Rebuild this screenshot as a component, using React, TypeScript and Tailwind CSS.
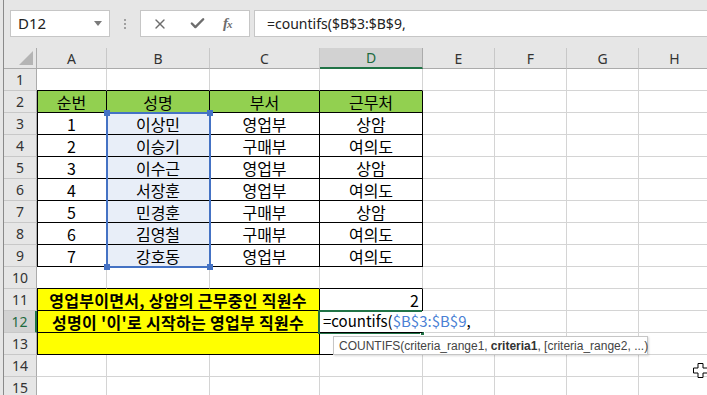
import { X, Check } from 'lucide-react';

const COLS = ['A', 'B', 'C', 'D', 'E', 'F', 'G', 'H'];
const ROWS = Array.from({ length: 15 }, (_, i) => i + 1);

const body: Record<number, string[]> = {
    2: ['순번', '성명', '부서', '근무처'],
    3: ['1', '이상민', '영업부', '상암'],
    4: ['2', '이승기', '구매부', '여의도'],
    5: ['3', '이수근', '영업부', '상암'],
    6: ['4', '서장훈', '영업부', '여의도'],
    7: ['5', '민경훈', '구매부', '상암'],
    8: ['6', '김영철', '구매부', '여의도'],
    9: ['7', '강호동', '영업부', '여의도'],
};

const inTable = (r: number, c: number) => c < 4 && ((r >= 2 && r <= 9) || (r >= 11 && r <= 13));

const cellFont = "font-['Noto_Sans_CJK_KR',sans-serif] text-[16px] text-black";

function Cell({ r, c }: { r: number; c: number }) {
    const right = inTable(r, c) || inTable(r, c + 1) ? 'border-r-black' : 'border-r-[#d4d4d4]';
    const bottom = inTable(r, c) || inTable(r + 1, c) ? 'border-b-black' : 'border-b-[#d4d4d4]';
    const leftEdge = c === 0 && inTable(r, c) ? 'shadow-[inset_1px_0_0_#000]' : '';
    let bg = '';
    if (r === 2 && c < 4) bg = 'bg-[#92d050]';
    if (r >= 3 && r <= 9 && c === 1) bg = 'bg-[#e8eef8]';
    const text = body[r]?.[c];

    if (r === 12 && c === 3) {
        // cell being edited: text runs over into E12, no right edge drawn
        return (
            <div className={`border-r border-b border-r-transparent ${bottom} flex items-center pl-[3px] whitespace-nowrap overflow-visible relative z-30 font-['Noto_Sans_CJK_KR',sans-serif] text-[15px] text-black`}>
                <span>=countifs(</span>
                <span className="text-[#4a7fd4]">$B$3:$B$9</span>
                <span>,</span>
            </div>
        );
    }

    return (
        <div className={`border-r border-b ${right} ${bottom} ${leftEdge} ${bg} flex items-center justify-center ${cellFont}`}>
            {r === 11 && c === 3 ? <span className="ml-auto pr-[3px]">2</span> : text}
        </div>
    );
}

function YellowMerged({ label }: { label: string }) {
    return (
        <div className={`col-span-3 border-r border-b border-r-black border-b-black shadow-[inset_1px_0_0_#000] bg-[#ffff00] flex items-center justify-center font-bold tracking-[0.3px] ${cellFont}`}>
            {label}
        </div>
    );
}

export default function App() {
    return (
        <div className="relative w-[707px] h-[395px] overflow-hidden bg-[#e6e6e6] font-['Noto_Sans',sans-serif]">
            <div className="ml-[3px] border-l border-l-[#8a8a8a] h-full flex flex-col">
                {/* formula bar */}
                <div className="h-[48px] flex items-start pt-[10px] pl-[6px] shrink-0">
                    <div className="w-[100px] h-[27px] bg-white border border-[#c6c6c6] flex items-center pl-[7px] pr-[7px]">
                        <span className="text-[15px] text-[#222]">D12</span>
                        <span className="ml-auto w-0 h-0 border-l-[4px] border-r-[4px] border-t-[5px] border-l-transparent border-r-transparent border-t-[#7a7a7a]" />
                    </div>
                    <div className="w-[30px] h-[27px] flex flex-col items-center justify-center gap-[2px]">
                        <span className="w-[2px] h-[2px] bg-[#a0a0a0]" />
                        <span className="w-[2px] h-[2px] bg-[#a0a0a0]" />
                        <span className="w-[2px] h-[2px] bg-[#a0a0a0]" />
                    </div>
                    <div className="w-[110px] h-[27px] bg-white border border-[#c6c6c6] flex items-center">
                        <X className="w-[16px] h-[16px] text-[#6d6d6d] ml-[11px]" strokeWidth={2} />
                        <Check className="w-[17px] h-[17px] text-[#6d6d6d] ml-[21px]" strokeWidth={3.4} />
                        <span className="ml-[17px] italic font-['Liberation_Serif',serif] text-[#6d6d6d] text-[15px] font-bold tracking-[-1px]">
                            f<span className="text-[11px]">x</span>
                        </span>
                    </div>
                    <div className="ml-[4px] flex-1 h-[27px] bg-white border border-[#c6c6c6] border-r-0 flex items-center pl-[12px]">
                        <span className="text-[14px] text-[#222]">=countifs($B$3:$B$9,</span>
                    </div>
                </div>

                {/* sheet grid */}
                <div className="grid grid-cols-[33px_70px_103px_110px_103px_72px_72px_72px_72px] grid-rows-[21px_repeat(15,22px)] bg-white">
                    <div className="bg-[#e6e6e6] border-r border-b border-[#ababab] relative">
                        <svg className="absolute right-[3px] bottom-[3px]" width="14" height="14" viewBox="0 0 14 14">
                            <polygon points="14,0 14,14 0,14" fill="#b4b4b4" />
                        </svg>
                    </div>
                    {COLS.map((c) =>
                        c === 'D' ? (
                            <div key={c} className="bg-[#d2d2d2] border-r border-r-[#ababab] border-b-2 border-b-[#217346] flex items-center justify-center text-[14px] text-[#1e6b3f]">
                                {c}
                            </div>
                        ) : (
                            <div key={c} className="bg-[#e6e6e6] border-r border-r-[#c8c8c8] border-b border-b-[#ababab] flex items-center justify-center text-[14px] text-[#333]">
                                {c}
                            </div>
                        )
                    )}
                    {ROWS.map((r) => (
                        <div key={r} className="contents">
                            {r === 12 ? (
                                <div className="bg-[#d2d2d2] border-r-2 border-r-[#217346] border-b border-b-[#c8c8c8] flex items-center justify-center text-[14px] text-[#1e6b3f]">
                                    {r}
                                </div>
                            ) : (
                                <div className="bg-[#e6e6e6] border-r border-r-[#ababab] border-b border-b-[#c8c8c8] flex items-center justify-center text-[14px] text-[#333]">
                                    {r}
                                </div>
                            )}
                            {r === 11 ? (
                                <>
                                    <YellowMerged label="영업부이면서, 상암의 근무중인 직원수" />
                                    {[3, 4, 5, 6, 7].map((c) => <Cell key={c} r={r} c={c} />)}
                                </>
                            ) : r === 12 ? (
                                <>
                                    <YellowMerged label="성명이 '이'로 시작하는 영업부 직원수" />
                                    {[3, 4, 5, 6, 7].map((c) => <Cell key={c} r={r} c={c} />)}
                                </>
                            ) : r === 13 ? (
                                <>
                                    <YellowMerged label="" />
                                    {[3, 4, 5, 6, 7].map((c) => <Cell key={c} r={r} c={c} />)}
                                </>
                            ) : (
                                COLS.map((_, c) => <Cell key={c} r={r} c={c} />)
                            )}
                        </div>
                    ))}
                </div>
            </div>

            {/* formula reference range B3:B9 */}
            <div className="absolute left-[106px] top-[112px] w-[105px] h-[156px] border-2 border-[#4472c4] z-20" />
            <span className="absolute left-[104px] top-[110px] w-[6px] h-[6px] bg-[#4472c4] z-20" />
            <span className="absolute left-[207px] top-[110px] w-[6px] h-[6px] bg-[#4472c4] z-20" />
            <span className="absolute left-[104px] top-[264px] w-[6px] h-[6px] bg-[#4472c4] z-20" />
            <span className="absolute left-[207px] top-[264px] w-[6px] h-[6px] bg-[#4472c4] z-20" />

            {/* active cell D12 (edit mode, open on the right) */}
            <div className="absolute left-[318px] top-[310px] w-[104px] h-[24px] border-2 border-r-0 border-[#217346] z-20" />
            <span className="absolute left-[420px] top-[331px] w-[5px] h-[5px] bg-[#217346] border border-white z-20" />

            {/* function tooltip */}
            <div className="absolute left-[333px] top-[336px] w-[315px] h-[19px] bg-white border border-[#c6c6c6] shadow-[1px_1px_2px_rgba(0,0,0,0.15)] flex items-center pl-[5px] font-['Liberation_Sans',sans-serif] text-[12px] text-[#444] whitespace-nowrap z-40">
                COUNTIFS(criteria_range1, <span className="font-bold text-[#333] ml-[3px]">criteria1</span>, [criteria_range2, ...)
            </div>

            {/* mouse cursor */}
            <svg className="absolute left-[693px] top-[363px] z-40" width="15" height="15" viewBox="0 0 15 15">
                <path d="M5 0.5 H10 V5 H14.5 V10 H10 V14.5 H5 V10 H0.5 V5 H5 Z" fill="white" stroke="black" strokeWidth="1" />
            </svg>
        </div>
    );
}
